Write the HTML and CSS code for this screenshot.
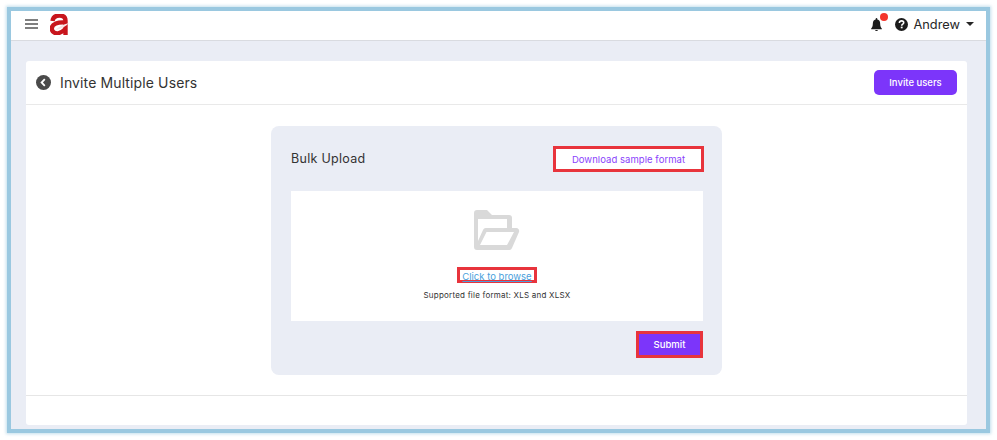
FILE: index.html
```html
<!DOCTYPE html>
<html lang="en">
<head>
<meta charset="utf-8">
<title>Invite Multiple Users</title>
<link rel="stylesheet" href="styles.css">
</head>
<body>
<div class="window">
  <header class="topbar">
    <svg class="menu" width="13" height="10" viewBox="0 0 13 10"><path d="M0 1h13M0 5h13M0 9h13" stroke="#555" stroke-width="1.400"/></svg>
    <svg class="logo" width="19" height="21" viewBox="0 0 19 21">
      <path d="M2.500 7C3 3 5.500 1.500 9.500 1.500C13.500 1.500 15.500 3.500 15.500 7V21" fill="none" stroke="#c8161d" stroke-width="4.400"/>
      <path d="M15.500 8.500C8 8 1.800 9.500 1.800 14.500C1.800 18.500 6 20 9 19C12 18 14 16.500 15.500 15" fill="none" stroke="#c8161d" stroke-width="4.400"/>
      <path d="M5.500 16C8.500 12.500 13 10.500 19 9C15.500 12.500 11 15 5.500 16Z" fill="#f8e4e5"/>
    </svg>
    <div class="spacer"></div>
    <span class="bell">
      <svg width="11" height="13" viewBox="0 0 13 14" preserveAspectRatio="none"><path d="M6.500 0a1 1 0 0 1 1 1v.6A4.200 4.200 0 0 1 10.800 5.700c0 3.500 1 4.600 2 5.600v.9H.2v-.9c1-1 2-2.100 2-5.600A4.200 4.200 0 0 1 5.500 1.600V1a1 1 0 0 1 1-1zM4.800 12.800h3.400a1.700 1.200 0 0 1-3.400 0z" fill="#1c1c1c"/></svg>
      <i class="dot"></i>
    </span>
    <svg class="help" width="13" height="13" viewBox="0 0 14 14"><circle cx="7" cy="7" r="7" fill="#1c1c1c"/><path d="M4.700 5.400C4.800 3.900 5.800 3.100 7.100 3.100C8.500 3.100 9.400 4 9.400 5.100C9.400 6.700 7.200 6.700 7.200 8.300" fill="none" stroke="#fff" stroke-width="1.700"/><rect x="6.200" y="9.300" width="2" height="1.800" fill="#fff"/></svg>
    <span class="user">Andrew</span>
    <i class="caret"></i>
  </header>
  <main class="content">
    <section class="card">
      <div class="card-head">
        <svg class="back" width="15" height="15" viewBox="0 0 15 15"><circle cx="7.500" cy="7.500" r="7.500" fill="#4a4a4a"/><path d="M8.800 4.200L5.600 7.500L8.800 10.800" fill="none" stroke="#fff" stroke-width="1.800"/></svg>
        <h1 class="title">Invite Multiple Users</h1>
        <button class="btn invite">Invite users</button>
      </div>
      <div class="card-body">
        <div class="panel">
          <div class="panel-head">
            <h2 class="panel-title">Bulk Upload</h2>
            <button class="download">Download sample format</button>
          </div>
          <div class="drop">
            <svg class="folder" width="46" height="40" viewBox="0 0 46 40">
              <path fill="#d9d9d9" fill-rule="evenodd" d="M3 0H13L18 5H35a3 3 0 0 1 3 3V18H42a3 3 0 0 1 3 4L38 38a3 3 0 0 1-3 2H3a3 3 0 0 1-3-3V3a3 3 0 0 1 3-3ZM4 9V31L9 20a3 3 0 0 1 3-2H33V9ZM12.500 22L6 35H33L40 22Z"/>
            </svg>
            <a class="browse" href="#">Click to browse</a>
            <p class="hint">Supported file format: XLS and XLSX</p>
          </div>
          <div class="panel-foot">
            <button class="btn submit">Submit</button>
          </div>
        </div>
      </div>
      <div class="card-foot"></div>
    </section>
  </main>
</div>
</body>
</html>
```
FILE: styles.css
```css
* { box-sizing: border-box; }
html, body { margin: 0; height: 100%; }
body {
  background: #fff;
  padding: 11px;
  font-family: "Inter", "Open Sans", sans-serif;
  overflow: hidden;
}
.window {
  width: 975px;
  height: 418px;
  background: #eaedf5;
  box-shadow: 0 0 0 4px #9ac8e0, 0 0 3px 5px rgba(154, 200, 224, .6);
  display: flex;
  flex-direction: column;
  overflow: hidden;
}
.topbar {
  height: 30px;
  flex: none;
  background: #fff;
  border-bottom: 1px solid #d9dbe0;
  display: flex;
  align-items: center;
  padding: 0 12px 3px 14px;
}
.menu { margin-right: 12px; }
.spacer { flex: 1; }
.bell { position: relative; display: flex; margin-right: 13px; }
.dot {
  position: absolute;
  left: 9px;
  top: -5px;
  width: 8px;
  height: 8px;
  border-radius: 50%;
  background: #f4352c;
}
.help { margin-right: 5px; }
.user { font-size: 12.800px; color: #262626; margin-right: 6px; }
.caret {
  width: 0;
  height: 0;
  border-left: 4px solid transparent;
  border-right: 4px solid transparent;
  border-top: 4px solid #262626;
}
.content { flex: 1; padding: 20px 19px 4px 15px; min-height: 0; }
.card {
  height: 364px;
  background: #fff;
  border-radius: 3px;
  display: flex;
  flex-direction: column;
}
.card-head {
  height: 44px;
  flex: none;
  border-bottom: 1px solid #e9e9e9;
  display: flex;
  align-items: center;
  padding: 0 10px 1px 10px;
}
.back { margin-right: 9px; }
.title {
  flex: 1;
  margin: 0;
  font-size: 14px;
  font-weight: 400;
  letter-spacing: .12px;
  color: #333;
}
.btn {
  border: 0;
  background: #7c35fa;
  color: #fff;
  font-family: inherit;
  font-weight: 500;
}
.invite {
  width: 83px;
  height: 25px;
  border-radius: 5px;
  font-size: 9.500px;
}
.card-body {
  height: 291px;
  flex: none;
  border-bottom: 1px solid #e6e6e6;
  display: flex;
  justify-content: center;
  padding-top: 21px;
}
.panel {
  width: 451px;
  height: 249px;
  background: #eaedf5;
  border-radius: 8px;
  padding: 20px 19px 0 20px;
}
.panel-head {
  height: 45px;
  display: flex;
  align-items: flex-start;
  justify-content: space-between;
}
.panel-title {
  margin: 5px 0 0;
  font-size: 12.500px;
  font-weight: 400;
  letter-spacing: .3px;
  color: #333;
}
.download {
  width: 151px;
  height: 26px;
  background: #fff;
  border: 3px solid #e8343c;
  color: #8a3ffc;
  font-family: inherit;
  font-size: 9.500px;
  font-weight: 400;
  letter-spacing: .05px;
  padding: 0;
  margin-right: -1px;
}
.drop {
  height: 130px;
  background: #fff;
  display: flex;
  flex-direction: column;
  align-items: center;
  padding-top: 19px;
}
.folder { flex: none; }
.browse {
  margin-top: 17px;
  width: 80px;
  height: 16px;
  border: 3px solid #e8343c;
  font-size: 9.500px;
  line-height: 13px;
  text-align: center;
  white-space: nowrap;
  color: #4a9fdc;
}
.hint {
  margin: 6px 0 0;
  font-size: 8px;
  line-height: 12px;
  letter-spacing: .22px;
  color: #333;
}
.panel-foot { display: flex; justify-content: flex-end; padding-top: 10px; }
.submit {
  width: 67px;
  height: 27px;
  border: 3px solid #e8343c;
  font-size: 9.500px;
  padding: 0;
}
.card-foot { flex: 1; }
```
